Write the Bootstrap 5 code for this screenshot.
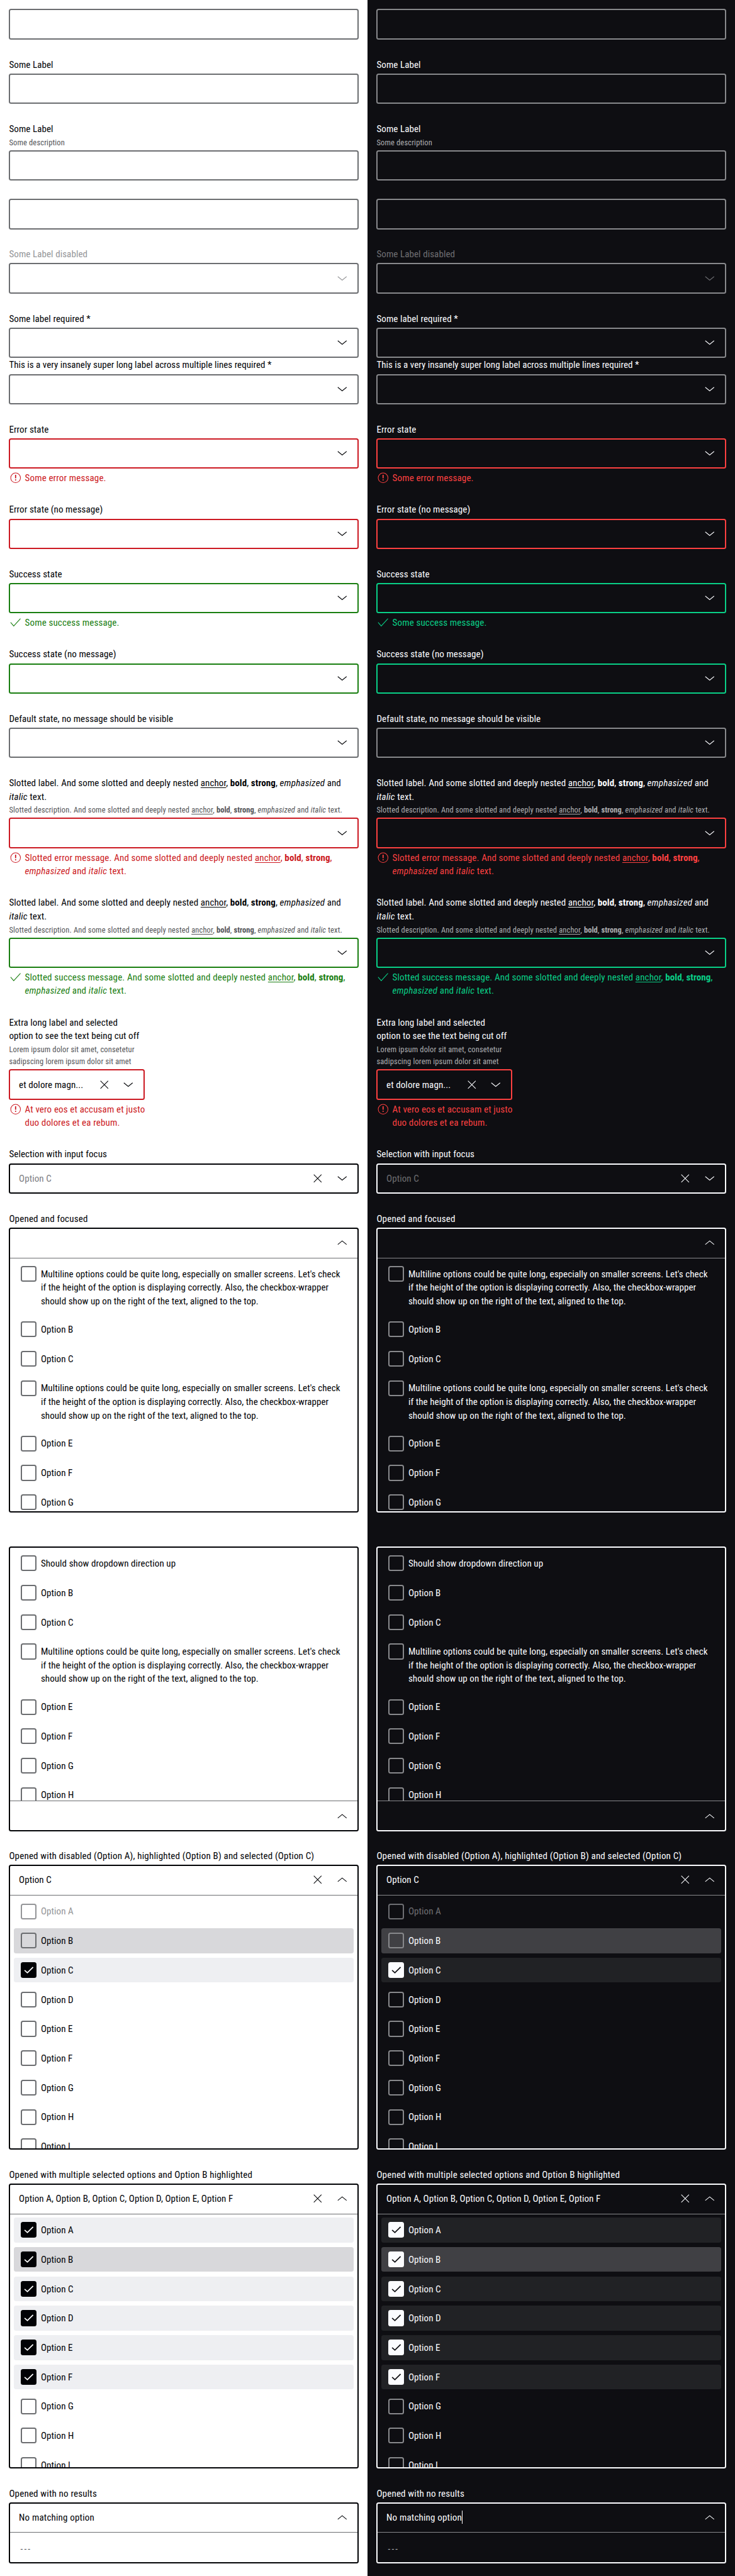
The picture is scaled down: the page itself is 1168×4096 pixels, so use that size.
<!DOCTYPE html>
<html lang="en">
<head>
<meta charset="utf-8">
<title>Multi-select states</title>
<meta name="viewport" content="width=device-width, initial-scale=1">
<link rel="stylesheet" href="https://cdn.jsdelivr.net/npm/bootstrap@5.3.0/dist/css/bootstrap.min.css">
<style>
  :root { font-size: 14.375px; }
  body { font-family: "Roboto Condensed", Roboto, "Liberation Sans", sans-serif; font-stretch: 85%; font-size: 1.05rem; line-height: 1.5rem; letter-spacing: .004em; overflow-x: hidden; }
  .theme {
    --fg: #010205; --bg: #fff; --muted: #535457; --line: #6b6d70; --off: #949598; --ghost: #7c7d81;
    --err: #cc1922; --ok: #197e10; --sel: #eeeff2; --hot: #d8d8db;
    width: 50%; background: var(--bg); color: var(--fg);
  }
  .theme-night {
    --fg: #fbfcff; --bg: #0e0e12; --muted: #afb0b3; --line: #88898c; --off: #6e6f73; --ghost: #6e6f73;
    --err: #fc4040; --ok: #09d087; --sel: #212225; --hot: #404044;
  }
  .field { margin-bottom: 2rem; }
  .field-tight { margin-bottom: 0; }
  .field-slim { width: 15rem; }
  .field-up { padding-top: 1.75rem; }
  .cap, .desc, .msg span, .ctl span { padding-top: 1px; margin-bottom: -1px; }
  .cap { display: block; }
  .cap + .box, .desc + .box { margin-top: .25rem; }
  .cap-tight { letter-spacing: 0; }
  .cap-wide { letter-spacing: .0105em; }
  .desc { font-size: .87rem; line-height: 1.359rem; letter-spacing: .012em; color: var(--muted); }
  .box { border: 2px solid var(--line); border-radius: .25rem; overflow: hidden; }
  .box, .ctl { height: 3.375rem; }
  .ctl { flex: none; margin: -2px 0; padding: 0 calc(1.0625rem - 2px) 0 calc(1.09rem - 2px); gap: 1.1875rem; }
  .s-err { border-color: var(--err); }
  .s-ok { border-color: var(--ok); }
  .s-focus { border-color: var(--fg); }
  .opened { height: 31.5rem; }
  .opened-empty { height: 6.75rem; }
  .rule-b { border-bottom: 1px solid var(--line); margin-bottom: 0; }
  .rule-t { border-top: 1px solid var(--line); margin-top: 0; }
  .ico { width: 1.5rem; height: 1.5rem; flex: none; fill: none; stroke: currentColor; stroke-width: 1.15; }
  .msg { margin-top: .25rem; gap: .25rem; letter-spacing: .008em; }
  .msg-err { color: var(--err); }
  .msg-ok { color: var(--ok); }
  .theme b, .theme strong { font-weight: 700; letter-spacing: .004em; }
  .theme em { letter-spacing: .014em; }
  .theme a { color: inherit; text-underline-offset: .12em; }
  .faded { color: var(--off); }
  .ghosted { color: var(--ghost); }
  .opts { flex: 1 1 0; min-height: 0; overflow: hidden; padding: .375rem; gap: .5rem; }
  .opt { flex: none; padding: .5rem .75rem; border-radius: .25rem; }
  .opt span { padding-top: calc(.125rem + 1px); margin-bottom: -1px; }
  .opt i { width: 1.75rem; height: 1.75rem; flex: none; border: 2px solid var(--line); border-radius: .25rem; display: block; }
  .opt svg { width: 1.75rem; height: 1.75rem; flex: none; border-radius: .25rem; background: var(--fg); fill: none; stroke: var(--bg); stroke-width: 2; }
  .opt.picked { background: var(--sel); }
  .opt.hot { background: var(--hot); }
  .opt.faded i { border-color: var(--off); }
  .opt .long { letter-spacing: .0035em; }
  .opt .dashes { letter-spacing: .14em; color: var(--muted); }
  .ctl .caret { display: none; width: 1px; height: 1.5rem; padding: 0; margin: 0; background: var(--fg); }
  .theme-night .ctl .caret { display: block; }
</style>
<script src="https://cdn.jsdelivr.net/npm/bootstrap@5.3.0/dist/js/bootstrap.bundle.min.js"></script>
</head>
<body>
<svg class="d-none">
  <symbol id="down" viewBox="0 0 24 24"><path d="M4.2 8.6 12 15l7.8-6.4"/></symbol>
  <symbol id="up" viewBox="0 0 24 24"><path d="M4.2 15.4 12 9l7.8 6.4"/></symbol>
  <symbol id="close" viewBox="0 0 24 24"><path d="M5.2 5.2 18.8 18.8M18.8 5.2 5.2 18.8"/></symbol>
  <symbol id="warn" viewBox="0 0 24 24"><circle cx="12" cy="12" r="8.6"/><path d="M12 6.6v6.2M12 14.8v1.9" stroke-width="2"/></symbol>
  <symbol id="tick" viewBox="0 0 24 24"><path d="M3.2 11.8 8.7 18.2 20.6 5.2"/></symbol>
  <symbol id="mark-on" viewBox="0 0 28 28"><path d="M6.8 14.4 11.7 18.7 21.8 8.7"/></symbol>
</svg>
<main class="d-flex min-vh-100">
  <section class="theme p-3" id="day"></section>
  <section class="theme theme-night p-3" id="night"></section>
</main>

<template id="states">
  <div class="field"><div class="box"></div></div>
  <div class="field"><label class="cap">Some Label</label><div class="box"></div></div>
  <div class="field"><label class="cap">Some Label</label><div class="desc">Some description</div><div class="box"></div></div>
  <div class="field"><div class="box"></div></div>
  <div class="field"><label class="cap faded">Some Label disabled</label>
    <div class="box"><div class="ctl d-flex align-items-center justify-content-end faded"><svg class="ico"><use href="#down"/></svg></div></div></div>
  <div class="field field-tight"><label class="cap">Some label required *</label>
    <div class="box"><div class="ctl d-flex align-items-center justify-content-end"><svg class="ico"><use href="#down"/></svg></div></div></div>
  <div class="field"><label class="cap cap-tight">This is a very insanely super long label across multiple lines required *</label>
    <div class="box"><div class="ctl d-flex align-items-center justify-content-end"><svg class="ico"><use href="#down"/></svg></div></div></div>
  <div class="field"><label class="cap">Error state</label>
    <div class="box s-err"><div class="ctl d-flex align-items-center justify-content-end"><svg class="ico"><use href="#down"/></svg></div></div>
    <div class="msg msg-err d-flex"><svg class="ico"><use href="#warn"/></svg><span>Some error message.</span></div></div>
  <div class="field"><label class="cap">Error state (no message)</label>
    <div class="box s-err"><div class="ctl d-flex align-items-center justify-content-end"><svg class="ico"><use href="#down"/></svg></div></div></div>
  <div class="field"><label class="cap">Success state</label>
    <div class="box s-ok"><div class="ctl d-flex align-items-center justify-content-end"><svg class="ico"><use href="#down"/></svg></div></div>
    <div class="msg msg-ok d-flex"><svg class="ico"><use href="#tick"/></svg><span>Some success message.</span></div></div>
  <div class="field"><label class="cap">Success state (no message)</label>
    <div class="box s-ok"><div class="ctl d-flex align-items-center justify-content-end"><svg class="ico"><use href="#down"/></svg></div></div></div>
  <div class="field"><label class="cap">Default state, no message should be visible</label>
    <div class="box"><div class="ctl d-flex align-items-center justify-content-end"><svg class="ico"><use href="#down"/></svg></div></div></div>
  <div class="field"><label class="cap">Slotted label. And some slotted and deeply nested <a href="#">anchor</a>, <b>bold</b>, <strong>strong</strong>, <em>emphasized</em> and<br><em>italic</em> text.</label>
    <div class="desc text-nowrap">Slotted description. And some slotted and deeply nested <a href="#">anchor</a>, <b>bold</b>, <strong>strong</strong>, <em>emphasized</em> and <em>italic</em> text.</div>
    <div class="box s-err"><div class="ctl d-flex align-items-center justify-content-end"><svg class="ico"><use href="#down"/></svg></div></div>
    <div class="msg msg-err d-flex"><svg class="ico"><use href="#warn"/></svg><span>Slotted error message. And some slotted and deeply nested <a href="#">anchor</a>, <b>bold</b>, <strong>strong</strong>,<br><em>emphasized</em> and <em>italic</em> text.</span></div></div>
  <div class="field"><label class="cap">Slotted label. And some slotted and deeply nested <a href="#">anchor</a>, <b>bold</b>, <strong>strong</strong>, <em>emphasized</em> and<br><em>italic</em> text.</label>
    <div class="desc text-nowrap">Slotted description. And some slotted and deeply nested <a href="#">anchor</a>, <b>bold</b>, <strong>strong</strong>, <em>emphasized</em> and <em>italic</em> text.</div>
    <div class="box s-ok"><div class="ctl d-flex align-items-center justify-content-end"><svg class="ico"><use href="#down"/></svg></div></div>
    <div class="msg msg-ok d-flex"><svg class="ico"><use href="#tick"/></svg><span>Slotted success message. And some slotted and deeply nested <a href="#">anchor</a>, <b>bold</b>, <strong>strong</strong>,<br><em>emphasized</em> and <em>italic</em> text.</span></div></div>
  <div class="field field-slim"><label class="cap text-nowrap">Extra long label and selected<br>option to see the text being cut off</label>
    <div class="desc text-nowrap">Lorem ipsum dolor sit amet, consetetur<br>sadipscing lorem ipsum dolor sit amet</div>
    <div class="box s-err"><div class="ctl d-flex align-items-center"><span class="me-auto text-nowrap">et dolore magn...</span><svg class="ico"><use href="#close"/></svg><svg class="ico"><use href="#down"/></svg></div></div>
    <div class="msg msg-err d-flex text-nowrap"><svg class="ico"><use href="#warn"/></svg><span>At vero eos et accusam et justo<br>duo dolores et ea rebum.</span></div></div>
  <div class="field"><label class="cap">Selection with input focus</label>
    <div class="box s-focus"><div class="ctl d-flex align-items-center"><span class="me-auto ghosted">Option C</span><svg class="ico"><use href="#close"/></svg><svg class="ico"><use href="#down"/></svg></div></div></div>
  <div class="field"><label class="cap cap-wide">Opened and focused</label>
    <div class="box s-focus opened d-flex flex-column">
      <div class="ctl rule-b d-flex align-items-center justify-content-end"><svg class="ico"><use href="#up"/></svg></div>
      <div class="opts d-flex flex-column" data-opts="long|Option B|Option C|long|Option E|Option F|Option G"></div>
    </div></div>
  <div class="field field-up">
    <div class="box s-focus opened d-flex flex-column">
      <div class="opts d-flex flex-column" data-opts="Should show dropdown direction up|Option B|Option C|long|Option E|Option F|Option G|Option H"></div>
      <div class="ctl rule-t d-flex align-items-center justify-content-end"><svg class="ico"><use href="#up"/></svg></div>
    </div></div>
  <div class="field"><label class="cap cap-wide">Opened with disabled (Option A), highlighted (Option B) and selected (Option C)</label>
    <div class="box s-focus opened d-flex flex-column">
      <div class="ctl rule-b d-flex align-items-center"><span class="me-auto">Option C</span><svg class="ico"><use href="#close"/></svg><svg class="ico"><use href="#up"/></svg></div>
      <div class="opts d-flex flex-column" data-off="0" data-hot="1" data-on="2" data-opts="Option A|Option B|Option C|Option D|Option E|Option F|Option G|Option H|Option I"></div>
    </div></div>
  <div class="field"><label class="cap cap-wide">Opened with multiple selected options and Option B highlighted</label>
    <div class="box s-focus opened d-flex flex-column">
      <div class="ctl rule-b d-flex align-items-center"><span class="me-auto">Option A, Option B, Option C, Option D, Option E, Option F</span><svg class="ico"><use href="#close"/></svg><svg class="ico"><use href="#up"/></svg></div>
      <div class="opts d-flex flex-column" data-hot="1" data-on="012345" data-opts="Option A|Option B|Option C|Option D|Option E|Option F|Option G|Option H|Option I"></div>
    </div></div>
  <div><label class="cap cap-wide">Opened with no results</label>
    <div class="box s-focus opened-empty d-flex flex-column">
      <div class="ctl rule-b d-flex align-items-center gap-0"><span class="cap-wide">No matching option</span><span class="caret"></span><svg class="ico ms-auto"><use href="#up"/></svg></div>
      <div class="opts d-flex flex-column"><div class="opt d-flex"><span class="dashes">---</span></div></div>
    </div></div>
</template>

<script>
  const longText = "Multiline options could be quite long, especially on smaller screens. Let's check<br>if the height of the option is displaying correctly. Also, the checkbox-wrapper<br>should show up on the right of the text, aligned to the top.";
  const tpl = document.getElementById('states');
  for (const id of ['day', 'night']) {
    const col = document.getElementById(id);
    col.append(tpl.content.cloneNode(true));
    col.querySelectorAll('[data-opts]').forEach(list => {
      const { off = '', hot = '', on = '', opts } = list.dataset;
      list.innerHTML = opts.split('|').map((name, i) => {
        const has = set => set.includes(String(i));
        const state = has(hot) ? ' hot' : has(on) ? ' picked' : has(off) ? ' faded' : '';
        const tick = has(on) ? '<svg><use href="#mark-on"/></svg>' : '<i></i>';
        const text = name === 'long' ? `<span class="long text-nowrap">${longText}</span>` : `<span>${name}</span>`;
        return `<div class="opt d-flex gap-2${state}">${tick}${text}</div>`;
      }).join('');
    });
  }
</script>
</body>
</html>
